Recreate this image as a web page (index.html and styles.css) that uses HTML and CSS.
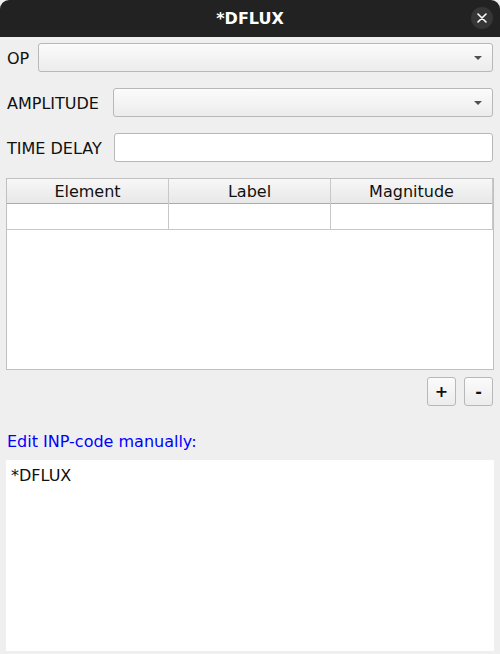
FILE: index.html
```html
<!DOCTYPE html>
<html>
<head>
<meta charset="utf-8">
<link rel="stylesheet" href="styles.css">
</head>
<body>
<div class="window">
  <div class="titlebar">
    <span class="title">*DFLUX</span>
    <span class="close">
      <svg width="10" height="10" viewBox="0 0 10 10"><path d="M1 1L9 9M9 1L1 9" stroke="#fff" stroke-width="1.6" stroke-linecap="round"/></svg>
    </span>
  </div>
  <div class="content">
    <div class="row">
      <span class="lbl lbl-op">OP</span>
      <div class="combo"><span class="arrow"></span></div>
    </div>
    <div class="row">
      <span class="lbl lbl-amp">AMPLITUDE</span>
      <div class="combo"><span class="arrow"></span></div>
    </div>
    <div class="row">
      <span class="lbl lbl-td">TIME DELAY</span>
      <div class="input"></div>
    </div>
    <div class="table">
      <div class="thead">
        <div class="th">Element</div>
        <div class="th">Label</div>
        <div class="th last">Magnitude</div>
      </div>
      <div class="tr">
        <div class="td"></div>
        <div class="td"></div>
        <div class="td last"></div>
      </div>
    </div>
    <div class="buttons">
      <div class="btn">+</div>
      <div class="btn">-</div>
    </div>
    <div class="edit-label">Edit INP-code manually:</div>
    <div class="code">*DFLUX</div>
  </div>
</div>
</body>
</html>
```
FILE: styles.css
```css
html, body {
  margin: 0;
  padding: 0;
  background: #efefef;
}
body {
  width: 500px;
  height: 654px;
  overflow: hidden;
  font-family: "DejaVu Sans", "Noto Sans", sans-serif;
  font-size: 16px;
  color: #101010;
}
.window {
  display: flex;
  flex-direction: column;
  height: 654px;
}
.titlebar {
  height: 37px;
  background: #222222;
  border-radius: 9px 9px 0 0;
  display: flex;
  align-items: center;
  justify-content: center;
  position: relative;
  flex-shrink: 0;
}
.title {
  color: #ffffff;
  font-weight: bold;
  font-size: 16px;
}
.close {
  position: absolute;
  right: 7px;
  top: 7px;
  width: 22px;
  height: 22px;
  border-radius: 50%;
  background: #363636;
  display: flex;
  align-items: center;
  justify-content: center;
}
.content {
  padding: 6px 6px 3px 6px;
  display: flex;
  flex-direction: column;
  flex: 1;
}
.row {
  display: flex;
  align-items: center;
  height: 29px;
  margin-bottom: 16px;
}
.lbl {
  box-sizing: border-box;
  padding-left: 1px;
  padding-top: 2px;
  white-space: nowrap;
  flex-shrink: 0;
}
.lbl-op { width: 32px; }
.lbl-amp { width: 107px; }
.lbl-td { width: 108px; }
.combo {
  flex: 1;
  height: 27px;
  border: 1px solid #b8b8b8;
  border-radius: 3px;
  background: linear-gradient(#fbfbfb, #ececec);
  position: relative;
  margin-right: 1px;
}
.arrow {
  position: absolute;
  right: 10px;
  top: 12px;
  width: 0;
  height: 0;
  border-left: 4px solid transparent;
  border-right: 4px solid transparent;
  border-top: 4px solid #505050;
}
.input {
  flex: 1;
  height: 27px;
  border: 1px solid #b8b8b8;
  border-radius: 3px;
  background: #ffffff;
  margin-right: 1px;
}
.table {
  height: 190px;
  border: 1px solid #c0c0c0;
  background: #ffffff;
  flex-shrink: 0;
}
.thead {
  display: grid;
  grid-template-columns: 162px 162px 162px;
  height: 24px;
  background: linear-gradient(#f7f7f7, #e8e8e8);
  border-bottom: 1px solid #ababab;
}
.th {
  text-align: center;
  line-height: 26px;
  border-right: 1px solid #c8c8c8;
}
.tr {
  display: grid;
  grid-template-columns: 162px 162px 162px;
  height: 25px;
  border-bottom: 1px solid #c8c8c8;
}
.td {
  border-right: 1px solid #c8c8c8;
}
.buttons {
  display: flex;
  justify-content: flex-end;
  gap: 8px;
  margin-top: 7px;
  padding-right: 1px;
}
.btn {
  width: 27px;
  height: 27px;
  border: 1px solid #b8b8b8;
  border-radius: 3px;
  background: linear-gradient(#fbfbfb, #ececec);
  display: flex;
  align-items: center;
  justify-content: center;
  font-size: 16px;
  font-weight: bold;
}
.edit-label {
  color: #0000ff;
  margin-top: 25px;
  padding-left: 1px;
  line-height: 22px;
}
.code {
  margin-top: 7px;
  flex: 1;
  background: #ffffff;
  padding: 6px 5px;
}
```
